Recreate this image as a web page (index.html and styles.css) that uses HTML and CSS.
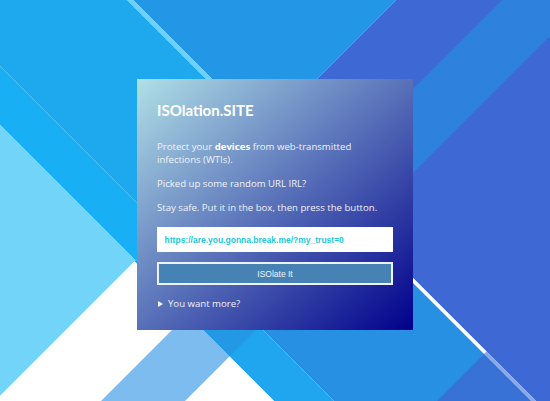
FILE: index.html
```html
<!DOCTYPE html>
<html lang="en">
<head>
<meta charset="utf-8">
<title>ISOlation.SITE</title>
<link rel="stylesheet" href="styles.css">
</head>
<body>
<div class="backdrop" aria-hidden="true">
  <svg class="backdrop-art" viewBox="0 0 550 401" width="550" height="401" preserveAspectRatio="none">
    <g transform="matrix(0.5 0.5 -0.5 0.5 0 0)">
      <rect x="-200" y="-800" width="596" height="667" fill="#2397e6"/>
      <rect x="-200" y="-133" width="596" height="6" fill="#6fd1fa"/>
      <rect x="-200" y="-127" width="596" height="193" fill="#1ea8ee"/>
      <rect x="-200" y="66" width="596" height="59" fill="#19aff4"/>
      <rect x="-200" y="125" width="596" height="700" fill="#72d4f8"/>
      <rect x="396" y="-800" width="800" height="665" fill="#3e68d3"/>
      <rect x="396" y="-135" width="442" height="5" fill="#ffffff"/>
      <rect x="396" y="-130" width="800" height="197" fill="#2890e3"/>
      <rect x="396" y="67" width="800" height="60" fill="#1fa6ee"/>
      <rect x="396" y="127" width="800" height="700" fill="#ffffff"/>
      <rect x="502" y="-800" width="84" height="665" fill="#2e82dd"/>
      <rect x="502" y="67" width="84" height="60" fill="#2399e6"/>
      <rect x="502" y="127" width="84" height="700" fill="#7dbcee"/>
      <rect x="838" y="-135" width="400" height="5" fill="#8ea8e3"/>
      <rect x="838" y="-130" width="400" height="197" fill="#3872d7"/>
    </g>
  </svg>
</div>
<main class="page">
  <section class="card">
    <h1 class="title">ISOlation.SITE</h1>
    <p class="text">Protect your <strong>devices</strong> from web-transmitted infections (WTIs).</p>
    <p class="text">Picked up some random URL IRL?</p>
    <p class="text">Stay safe. Put it in the box, then press the button.</p>
    <form class="form" onsubmit="return false">
      <input class="url" type="text" value="https://are.you.gonna.break.me/?my_trust=0">
      <button class="go" type="submit">ISOlate It</button>
    </form>
    <details class="more">
      <summary class="more-toggle">You want more?</summary>
      <p class="text">Each link opens in an isolated browser, far away from your device.</p>
    </details>
  </section>
</main>
</body>
</html>
```

FILE: styles.css
```css
html, body {
  margin: 0;
  padding: 0;
}

body {
  width: 550px;
  height: 401px;
  overflow: hidden;
  font-family: "Open Sans", "Noto Sans", sans-serif;
  color: #f2f4fa;
}

.backdrop {
  position: fixed;
  inset: 0;
  z-index: -1;
  overflow: hidden;
}

.backdrop-art {
  display: block;
  width: 550px;
  height: 401px;
}

.page {
  display: flex;
  justify-content: center;
  padding-top: 79px;
}

.card {
  width: 276px;
  box-sizing: border-box;
  padding: 21.2px 20px 20px;
  background: linear-gradient(to bottom right, #b0e0e6, #00008b);
}

.title {
  margin: 0 0 20px;
  font-family: Lato, "Open Sans", sans-serif;
  font-size: 15px;
  line-height: 20px;
  font-weight: 700;
  color: #ffffff;
}

.text {
  margin: 0 0 10.5px;
  font-size: 9.6px;
  line-height: 13.3px;
  color: #f0f2f8;
}

.text strong {
  font-weight: 700;
  color: #ffffff;
}

.form {
  margin: 13px 0 0;
}

.url {
  display: block;
  width: 100%;
  height: 25px;
  box-sizing: border-box;
  margin: 0;
  padding: 0 7.6px;
  border: 0;
  outline: none;
  background: #ffffff;
  font-family: "Liberation Sans", Arial, sans-serif;
  font-size: 8.5px;
  font-weight: 700;
  color: #22c8d8;
}

.go {
  display: block;
  width: 100%;
  height: 23px;
  box-sizing: border-box;
  margin: 10px 0 0;
  padding: 0;
  border: 2px solid #eef1f5;
  background: #4682b4;
  font-family: "Liberation Sans", Arial, sans-serif;
  font-size: 8.5px;
  color: #eef3f8;
}

.more {
  margin-top: 11.6px;
}

.more-toggle {
  display: flex;
  align-items: center;
  list-style: none;
  font-size: 9.6px;
  line-height: 13.3px;
  color: #f0f2f8;
  cursor: pointer;
}

.more-toggle::-webkit-details-marker {
  display: none;
}

.more-toggle::before {
  content: "";
  width: 0;
  height: 0;
  margin: 0 5px 0 1px;
  border-left: 5px solid #f4f6fb;
  border-top: 3.5px solid transparent;
  border-bottom: 3.5px solid transparent;
}
```
